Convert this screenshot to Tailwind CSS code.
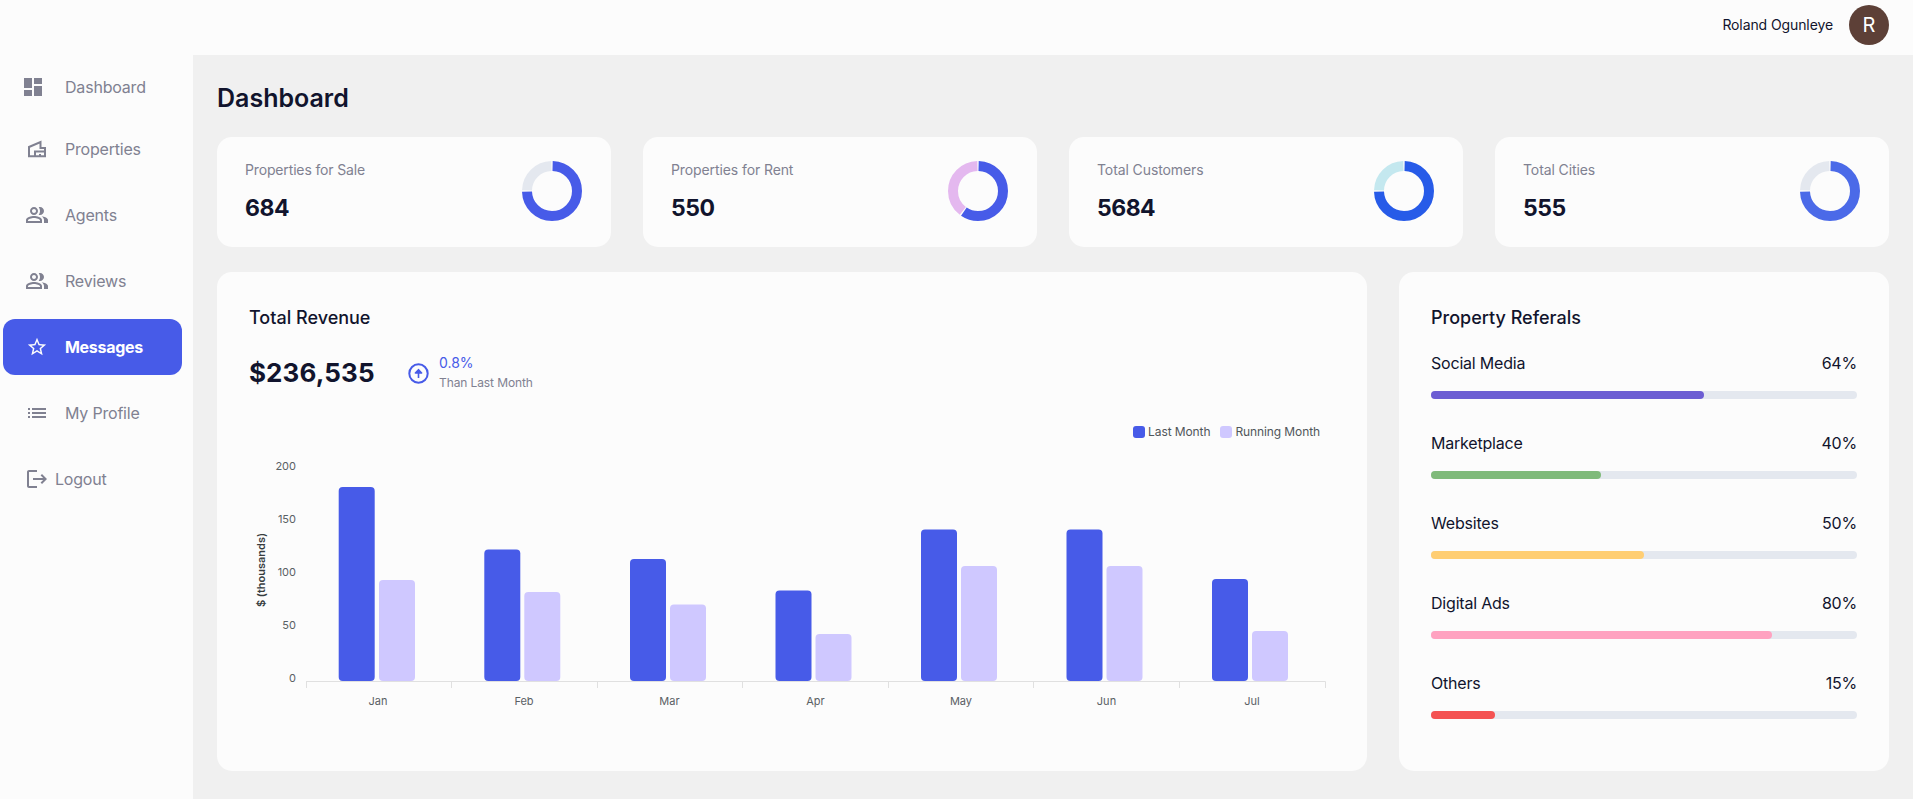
<!DOCTYPE html>
<html lang="en">
<head>
<meta charset="utf-8">
<title>Dashboard</title>
<script src="https://cdn.jsdelivr.net/npm/@tailwindcss/browser@4"></script>
</head>
<body class="font-['Inter',sans-serif] bg-[#fcfcfc] text-[#11142d] h-[799px] overflow-hidden">
<header class="h-[55px] bg-[#fcfcfc] flex items-center justify-end pr-6 pb-[9px] pt-[3px] gap-4">
  <span class="text-sm text-[#11142d] tracking-[-0.1px]">Roland Ogunleye</span>
  <div class="w-10 h-10 rounded-full bg-[#5d4037] text-white text-xl flex items-center justify-center">R</div>
</header>
<div class="flex h-[744px]">
  <aside class="w-[193px] shrink-0 bg-[#fcfcfc] pt-1 px-[3px] text-[#808191] flex flex-col">
    <a class="h-14 w-[179px] flex items-center pl-[18px] mb-[6px]">
      <svg class="w-6 h-6 shrink-0" viewBox="0 0 24 24" fill="#808191"><path d="M3 13h8V3H3v10zm0 8h8v-6H3v6zm10 0h8V11h-8v10zm0-18v6h8V3h-8z"/></svg>
      <span class="ml-5 tracking-[-0.2px]">Dashboard</span>
    </a>
    <a class="h-14 w-[179px] flex items-center pl-[22px] mb-[10px]">
      <svg class="w-6 h-6 shrink-0" viewBox="0 0 24 24" fill="none" stroke="#808191" stroke-width="2"><path d="M4 19.3V10L15.5 5v6H20v8.3z"/><path d="M10 19.3V14.5H20"/><path d="M15 19.3v-2.3"/></svg>
      <span class="ml-4 tracking-[-0.2px]">Properties</span>
    </a>
    <a class="h-14 w-[179px] flex items-center pl-[22px] mb-[10px]">
      <svg class="w-6 h-6 shrink-0" viewBox="0 0 24 24" fill="#808191"><path d="M16.67 13.13C18.04 14.06 19 15.32 19 17v3h4v-3c0-2.18-3.57-3.47-6.33-3.87z"/><path d="M15 12c2.21 0 4-1.79 4-4s-1.79-4-4-4c-.47 0-.91.1-1.33.24C14.5 5.27 15 6.58 15 8s-.5 2.73-1.33 3.76c.42.14.86.24 1.33.24z"/><path d="M9 12c2.21 0 4-1.79 4-4s-1.79-4-4-4-4 1.79-4 4 1.79 4 4 4zm0-6c1.1 0 2 .9 2 2s-.9 2-2 2-2-.9-2-2 .9-2 2-2z"/><path d="M9 13c-2.67 0-8 1.34-8 4v3h16v-3c0-2.66-5.33-4-8-4zm6 5H3v-.99C3.2 16.29 6.3 15 9 15s5.8 1.29 6 2v1z"/></svg>
      <span class="ml-4 tracking-[-0.2px]">Agents</span>
    </a>
    <a class="h-14 w-[179px] flex items-center pl-[22px] mb-[10px]">
      <svg class="w-6 h-6 shrink-0" viewBox="0 0 24 24" fill="#808191"><path d="M16.67 13.13C18.04 14.06 19 15.32 19 17v3h4v-3c0-2.18-3.57-3.47-6.33-3.87z"/><path d="M15 12c2.21 0 4-1.79 4-4s-1.79-4-4-4c-.47 0-.91.1-1.33.24C14.5 5.27 15 6.58 15 8s-.5 2.73-1.33 3.76c.42.14.86.24 1.33.24z"/><path d="M9 12c2.21 0 4-1.79 4-4s-1.79-4-4-4-4 1.79-4 4 1.79 4 4 4zm0-6c1.1 0 2 .9 2 2s-.9 2-2 2-2-.9-2-2 .9-2 2-2z"/><path d="M9 13c-2.67 0-8 1.34-8 4v3h16v-3c0-2.66-5.33-4-8-4zm6 5H3v-.99C3.2 16.29 6.3 15 9 15s5.8 1.29 6 2v1z"/></svg>
      <span class="ml-4 tracking-[-0.2px]">Reviews</span>
    </a>
    <a class="h-14 w-[179px] flex items-center pl-[23px] mb-[10px] bg-[#475be8] rounded-xl text-white font-bold">
      <svg class="w-[22px] h-[22px] shrink-0" viewBox="0 0 24 24" fill="#fcfcfc"><path d="M22 9.24l-7.19-.62L12 2 9.19 8.63 2 9.24l5.46 4.73L5.82 21 12 17.27 18.18 21l-1.63-7.03L22 9.24zM12 15.4l-3.76 2.27 1-4.28-3.32-2.88 4.38-.38L12 6.1l1.71 4.04 4.38.38-3.32 2.88 1 4.28L12 15.4z"/></svg>
      <span class="ml-[17px] tracking-[-0.3px]">Messages</span>
    </a>
    <a class="h-14 w-[179px] flex items-center pl-[22px] mb-[10px]">
      <svg class="w-6 h-6 shrink-0" viewBox="0 0 24 24" fill="#808191"><path d="M3 13h2v-2H3v2zm0 4h2v-2H3v2zm0-8h2V7H3v2zm4 4h14v-2H7v2zm0 4h14v-2H7v2zM7 7v2h14V7H7z"/></svg>
      <span class="ml-4 tracking-[-0.2px]">My Profile</span>
    </a>
    <a class="h-14 w-[179px] flex items-center pl-[22px]">
      <svg class="w-6 h-6 shrink-0" viewBox="0 0 24 24" fill="#808191"><path d="M17 7l-1.41 1.41L18.17 11H8v2h10.17l-2.58 2.58L17 17l5-5zM4 5h8V3H4c-1.1 0-2 .9-2 2v14c0 1.1.9 2 2 2h8v-2H4V5z"/></svg>
      <span class="ml-[6px] tracking-[-0.2px]">Logout</span>
    </a>
  </aside>
  <main class="flex-1 bg-[#f0f0f0] px-6">
    <h1 class="h-9 mt-[25px] mb-[21px] text-[25px] leading-9 font-semibold text-[#11142d]">Dashboard</h1>

    <section class="flex gap-8 mb-[25px]">
      <div class="w-[394px] h-[110px] bg-[#fcfcfc] rounded-[15px] pl-7 pr-[29px] flex justify-between">
        <div>
          <p class="mt-6 h-[18px] leading-[18px] text-sm text-[#808191] tracking-[-0.15px]">Properties for Sale</p>
          <p class="mt-[13px] text-[23px] leading-8 font-bold tracking-[-0.5px]">684</p>
        </div>
        <svg class="w-[60px] h-[60px] mt-6 -rotate-90" viewBox="0 0 60 60" fill="none" stroke-width="10"><circle cx="30" cy="30" r="25" pathLength="100" stroke="#475be8" stroke-dasharray="74.2 25.8" stroke-dashoffset="-0.4"/><circle cx="30" cy="30" r="25" pathLength="100" stroke="#e4e8ef" stroke-dasharray="24.2 75.8" stroke-dashoffset="-75.4"/></svg>
      </div>
      <div class="w-[394px] h-[110px] bg-[#fcfcfc] rounded-[15px] pl-7 pr-[29px] flex justify-between">
        <div>
          <p class="mt-6 h-[18px] leading-[18px] text-sm text-[#808191] tracking-[-0.1px]">Properties for Rent</p>
          <p class="mt-[13px] text-[23px] leading-8 font-bold tracking-[-0.5px]">550</p>
        </div>
        <svg class="w-[60px] h-[60px] mt-6 -rotate-90" viewBox="0 0 60 60" fill="none" stroke-width="10"><circle cx="30" cy="30" r="25" pathLength="100" stroke="#475be8" stroke-dasharray="59.2 40.8" stroke-dashoffset="-0.4"/><circle cx="30" cy="30" r="25" pathLength="100" stroke="#e4b8ef" stroke-dasharray="39.2 60.8" stroke-dashoffset="-60.4"/></svg>
      </div>
      <div class="w-[394px] h-[110px] bg-[#fcfcfc] rounded-[15px] pl-7 pr-[29px] flex justify-between">
        <div>
          <p class="mt-6 h-[18px] leading-[18px] text-sm text-[#808191] tracking-[-0.1px]">Total Customers</p>
          <p class="mt-[13px] text-[23px] leading-8 font-bold tracking-[-0.5px]">5684</p>
        </div>
        <svg class="w-[60px] h-[60px] mt-6 -rotate-90" viewBox="0 0 60 60" fill="none" stroke-width="10"><circle cx="30" cy="30" r="25" pathLength="100" stroke="#275be8" stroke-dasharray="74.2 25.8" stroke-dashoffset="-0.4"/><circle cx="30" cy="30" r="25" pathLength="100" stroke="#c4e8ef" stroke-dasharray="24.2 75.8" stroke-dashoffset="-75.4"/></svg>
      </div>
      <div class="w-[394px] h-[110px] bg-[#fcfcfc] rounded-[15px] pl-7 pr-[29px] flex justify-between">
        <div>
          <p class="mt-6 h-[18px] leading-[18px] text-sm text-[#808191] tracking-[-0.1px]">Total Cities</p>
          <p class="mt-[13px] text-[23px] leading-8 font-bold tracking-[-0.5px]">555</p>
        </div>
        <svg class="w-[60px] h-[60px] mt-6 -rotate-90" viewBox="0 0 60 60" fill="none" stroke-width="10"><circle cx="30" cy="30" r="25" pathLength="100" stroke="#4b6ae8" stroke-dasharray="74.2 25.8" stroke-dashoffset="-0.4"/><circle cx="30" cy="30" r="25" pathLength="100" stroke="#e4e8ef" stroke-dasharray="24.2 75.8" stroke-dashoffset="-75.4"/></svg>
      </div>
    </section>

    <section class="flex gap-8 h-[499px]">
      <div class="w-[1150px] bg-[#fcfcfc] rounded-[15px] flex flex-col">
        <div class="px-8 pt-8">
          <h2 class="text-lg leading-7 font-medium">Total Revenue</h2>
          <div class="mt-5 h-[42px] flex items-center">
            <span class="w-[159px] text-[26px] font-bold tracking-[0.1px] leading-[42px]">$236,535</span>
            <svg class="w-[21px] h-[21px]" viewBox="0 0 21 21" fill="none"><circle cx="10.5" cy="10.5" r="9.2" stroke="#475be8" stroke-width="2"/><path d="M10.5 15v-6.5M7.4 10l3.1-3.3 3.1 3.3z" stroke="#475be8" stroke-width="1.6" fill="#475be8" stroke-linejoin="round"/></svg>
            <div class="ml-[10px] -mt-px">
              <p class="text-sm leading-5 text-[#475be8]">0.8%</p>
              <p class="text-xs leading-[19px] text-[#808191] tracking-[-0.1px]">Than Last Month</p>
            </div>
          </div>
          <div class="mt-[30px] mr-[15px] h-4 flex justify-end items-center text-xs text-[#50565a] tracking-[-0.1px]">
            <span class="w-3 h-3 rounded-[3px] bg-[#475be8]"></span>
            <span class="ml-[3px] mr-[10px]">Last Month</span>
            <span class="w-3 h-3 rounded-[3px] bg-[#cfc8ff]"></span>
            <span class="ml-[3px]">Running Month</span>
          </div>
        </div>
        <svg class="block w-[1150px] h-[331px]" viewBox="217 440 1150 331">
          <g fill="#5a6064" font-size="11" text-anchor="end">
            <text x="296" y="470">200</text>
            <text x="296" y="523">150</text>
            <text x="296" y="576">100</text>
            <text x="296" y="629">50</text>
            <text x="296" y="682">0</text>
          </g>
          <text transform="translate(265 570) rotate(-90)" font-size="11" font-weight="600" text-anchor="middle" fill="#373d3f">$ (thousands)</text>
          <g fill="#475be8">
            <rect x="338.7" y="487" width="36" height="194" rx="4"/>
            <rect x="484.3" y="549.5" width="36" height="131.5" rx="4"/>
            <rect x="630" y="559" width="36" height="122" rx="4"/>
            <rect x="775.5" y="590.5" width="36" height="90.5" rx="4"/>
            <rect x="921" y="529.5" width="36" height="151.5" rx="4"/>
            <rect x="1066.5" y="529.5" width="36" height="151.5" rx="4"/>
            <rect x="1212" y="579" width="36" height="102" rx="4"/>
          </g>
          <g fill="#cfc8ff">
            <rect x="379" y="580" width="36" height="101" rx="4"/>
            <rect x="524.3" y="592" width="36" height="89" rx="4"/>
            <rect x="670" y="604.5" width="36" height="76.5" rx="4"/>
            <rect x="815.5" y="634" width="36" height="47" rx="4"/>
            <rect x="961" y="566" width="36" height="115" rx="4"/>
            <rect x="1106.5" y="566" width="36" height="115" rx="4"/>
            <rect x="1252" y="631" width="36" height="50" rx="4"/>
          </g>
          <path d="M306 681.5H1325.5M306.5 681.5v6.5M451.5 681.5v6.5M597.5 681.5v6.5M742.5 681.5v6.5M888.5 681.5v6.5M1033.5 681.5v6.5M1179.5 681.5v6.5M1325.5 681.5v6.5" stroke="#e0e0e0" fill="none"/>
          <g fill="#5a6064" font-size="11" text-anchor="middle">
            <text x="378" y="705">Jan</text>
            <text x="524" y="705">Feb</text>
            <text x="669.5" y="705">Mar</text>
            <text x="815.5" y="705">Apr</text>
            <text x="961" y="705">May</text>
            <text x="1106.5" y="705">Jun</text>
            <text x="1252" y="705">Jul</text>
          </g>
        </svg>
      </div>

      <div class="w-[490px] bg-[#fcfcfc] rounded-[15px] p-8">
        <h2 class="text-lg leading-7 font-medium mb-[19px]">Property Referals</h2>
        <div class="flex flex-col gap-8">
          <div><div class="flex justify-between h-6 leading-6 mb-4 tracking-[-0.2px]"><span>Social Media</span><span>64%</span></div><div class="h-2 rounded bg-[#e4e8ef]"><div class="h-2 w-[64%] rounded bg-[#6c5dd3]"></div></div></div>
          <div><div class="flex justify-between h-6 leading-6 mb-4 tracking-[-0.2px]"><span>Marketplace</span><span>40%</span></div><div class="h-2 rounded bg-[#e4e8ef]"><div class="h-2 w-[40%] rounded bg-[#7fba7a]"></div></div></div>
          <div><div class="flex justify-between h-6 leading-6 mb-4 tracking-[-0.2px]"><span>Websites</span><span>50%</span></div><div class="h-2 rounded bg-[#e4e8ef]"><div class="h-2 w-[50%] rounded bg-[#ffce73]"></div></div></div>
          <div><div class="flex justify-between h-6 leading-6 mb-4 tracking-[-0.2px]"><span>Digital Ads</span><span>80%</span></div><div class="h-2 rounded bg-[#e4e8ef]"><div class="h-2 w-[80%] rounded bg-[#ffa2c0]"></div></div></div>
          <div><div class="flex justify-between h-6 leading-6 mb-4 tracking-[-0.2px]"><span>Others</span><span>15%</span></div><div class="h-2 rounded bg-[#e4e8ef]"><div class="h-2 w-[15%] rounded bg-[#f45252]"></div></div></div>
        </div>
      </div>
    </section>
  </main>
</div>
</body>
</html>
